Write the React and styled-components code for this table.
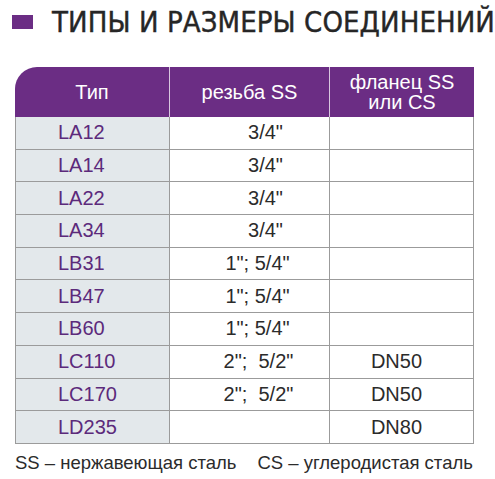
import styled, { createGlobalStyle } from "styled-components";

const GlobalStyle = createGlobalStyle`
	html, body {
		margin: 0;
		padding: 0;
		background: #ffffff;
	}
	body {
		font-family: "Liberation Sans", Arial, sans-serif;
	}
`;

// pad: small left offset of the thread value, as in the printed sheet
const rows = [
	{ type: "LA12", thread: "3/4\"", pad: 32, flange: "" },
	{ type: "LA14", thread: "3/4\"", pad: 32, flange: "" },
	{ type: "LA22", thread: "3/4\"", pad: 32, flange: "" },
	{ type: "LA34", thread: "3/4\"", pad: 32, flange: "" },
	{ type: "LB31", thread: "1\"; 5/4\"", pad: 16, flange: "" },
	{ type: "LB47", thread: "1\"; 5/4\"", pad: 16, flange: "" },
	{ type: "LB60", thread: "1\"; 5/4\"", pad: 16, flange: "" },
	{ type: "LC110", thread: "2\";  5/2\"", pad: 18, flange: "DN50" },
	{ type: "LC170", thread: "2\";  5/2\"", pad: 18, flange: "DN50" },
	{ type: "LD235", thread: "", pad: 0, flange: "DN80" },
];

const App = () => {
	return (
		<Page>
			<GlobalStyle />
			<Heading>
				<Marker />
				<HeadingText>ТИПЫ И РАЗМЕРЫ СОЕДИНЕНИЙ</HeadingText>
			</Heading>

			<Table>
				<HeadCell $first>Тип</HeadCell>
				<HeadCell>резьба SS</HeadCell>
				<HeadCell $last>
					фланец SS
					<br />
					или CS
				</HeadCell>

				{rows.map((row) => (
					<Row key={row.type}>
						<TypeCell>{row.type}</TypeCell>
						<ValueCell $shift={row.pad}>{row.thread}</ValueCell>
						<ValueCell $last>{row.flange}</ValueCell>
					</Row>
				))}
			</Table>

			<Legend>
				<span>SS – нержавеющая сталь</span>
				<span>CS – углеродистая сталь</span>
			</Legend>
		</Page>
	);
};

export default App;

const Page = styled.div`
	width: 495px;
	height: 479px;
	box-sizing: border-box;
	padding: 4px 0 0 15px;
	overflow: hidden;
`;

const Heading = styled.div`
	display: flex;
	align-items: center;
	height: 36px;
	margin-left: -3px;
`;

const Marker = styled.div`
	width: 26px;
	height: 14px;
	background: #6b2d84;
	margin-right: 19px;
`;

const HeadingText = styled.h1`
	margin: 0;
	font-family: "DejaVu Sans", sans-serif;
	font-stretch: condensed;
	font-weight: 400;
	font-size: 29px;
	letter-spacing: 0.1px;
	color: #262626;
	white-space: nowrap;
	-webkit-text-stroke: 0.4px #262626;
`;

const Table = styled.div`
	margin-top: 27px;
	width: 459px;
	display: grid;
	grid-template-columns: 155px 160px 144px;
	grid-template-rows: 50px;
	grid-auto-rows: 32.7px;
`;

const HeadCell = styled.div`
	background: #6b2d84;
	color: #ffffff;
	font-size: 20px;
	line-height: 20px;
	display: flex;
	align-items: center;
	justify-content: center;
	text-align: center;
	border-right: ${(p) => (p.$last ? "none" : "1px solid #d9c7e0")};
	border-top-left-radius: ${(p) => (p.$first ? "22px" : "0")};
`;

const Row = styled.div`
	display: contents;
`;

const Cell = styled.div`
	display: flex;
	align-items: center;
	box-sizing: border-box;
	border-bottom: 1.5px solid #9b9b9b;
	font-size: 20px;
`;

const TypeCell = styled(Cell)`
	background: #e3e8eb;
	color: #5c2a7b;
	padding-left: 42px;
	border-left: 1.5px solid #9b9b9b;
	border-right: 1px solid #9b9b9b;
`;

const ValueCell = styled(Cell)`
	justify-content: center;
	color: #2b2b2b;
	white-space: pre;
	padding-left: ${(p) => p.$shift || 0}px;
	padding-right: ${(p) => (p.$last ? "10px" : "0")};
	border-right: ${(p) => (p.$last ? "1.5px" : "1px")} solid #9b9b9b;
`;

const Legend = styled.div`
	display: flex;
	gap: 21px;
	margin-top: 8px;
	font-size: 18.5px;
	color: #2b2b2b;
	white-space: nowrap;
`;
